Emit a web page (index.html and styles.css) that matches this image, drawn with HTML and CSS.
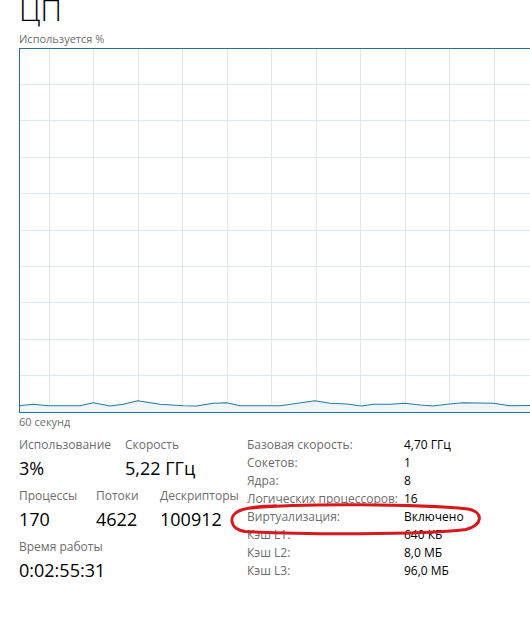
FILE: index.html
```html
<!DOCTYPE html>
<html lang="ru">
<head>
<meta charset="utf-8">
<title>ЦП</title>
<link rel="stylesheet" href="styles.css">
</head>
<body>
<div class="page">
  <div class="title">ЦП</div>
  <div class="caption">Используется %</div>
  <svg class="chart" width="515" height="366" viewBox="19 48 515 366" xmlns="http://www.w3.org/2000/svg">
    <rect x="19" y="48" width="515" height="366" fill="#ffffff"/>
    <g stroke="#dfe8ee" stroke-width="1">
      <line x1="49.5" y1="48" x2="49.5" y2="412"/>
      <line x1="93.5" y1="48" x2="93.5" y2="412"/>
      <line x1="138.5" y1="48" x2="138.5" y2="412"/>
      <line x1="182.5" y1="48" x2="182.5" y2="412"/>
      <line x1="227.5" y1="48" x2="227.5" y2="412"/>
      <line x1="271.5" y1="48" x2="271.5" y2="412"/>
      <line x1="316.5" y1="48" x2="316.5" y2="412"/>
      <line x1="360.5" y1="48" x2="360.5" y2="412"/>
      <line x1="405.5" y1="48" x2="405.5" y2="412"/>
      <line x1="449.5" y1="48" x2="449.5" y2="412"/>
      <line x1="494.5" y1="48" x2="494.5" y2="412"/>
      <line x1="19" y1="84.5" x2="534" y2="84.5"/>
      <line x1="19" y1="120.5" x2="534" y2="120.5"/>
      <line x1="19" y1="157.5" x2="534" y2="157.5"/>
      <line x1="19" y1="193.5" x2="534" y2="193.5"/>
      <line x1="19" y1="230.5" x2="534" y2="230.5"/>
      <line x1="19" y1="266.5" x2="534" y2="266.5"/>
      <line x1="19" y1="302.5" x2="534" y2="302.5"/>
      <line x1="19" y1="339.5" x2="534" y2="339.5"/>
      <line x1="19" y1="375.5" x2="534" y2="375.5"/>
    </g>
    <polygon fill="#eef6fb" points="19,405.7 33.3,404.3 48.3,405.7 80,405.7 93.3,402.7 110,406 123.3,404.3 137.7,400.7 160,404.3 183.3,405.7 196.7,406 213.3,403.3 226.7,402.7 240,405.7 280,405.7 315,400.7 330,403.3 346.7,404 361.7,406 373.3,404.3 390,404.3 405,403.3 420,405 433.3,406 446.7,404.3 463.3,402.7 493.3,403.3 510,405.7 534,405.5 534,412 19,412"/>
    <polyline fill="none" stroke="#2a77a2" stroke-width="1.1" points="19,405.7 33.3,404.3 48.3,405.7 80,405.7 93.3,402.7 110,406 123.3,404.3 137.7,400.7 160,404.3 183.3,405.7 196.7,406 213.3,403.3 226.7,402.7 240,405.7 280,405.7 315,400.7 330,403.3 346.7,404 361.7,406 373.3,404.3 390,404.3 405,403.3 420,405 433.3,406 446.7,404.3 463.3,402.7 493.3,403.3 510,405.7 534,405.5"/>
    <g stroke="#2b7197" stroke-width="1" fill="none">
      <line x1="19.5" y1="48" x2="19.5" y2="413"/>
      <line x1="19" y1="48.5" x2="534" y2="48.5"/>
      <line x1="19" y1="412.5" x2="534" y2="412.5"/>
    </g>
  </svg>
  <div class="caption axis">60 секунд</div>

  <div class="details">
    <div class="stats">
      <div class="stat-row">
        <div class="stat stat-usage">
          <div class="label">Использование</div>
          <div class="value">3%</div>
        </div>
        <div class="stat">
          <div class="label">Скорость</div>
          <div class="value">5,22 ГГц</div>
        </div>
      </div>
      <div class="stat-row">
        <div class="stat stat-proc">
          <div class="label">Процессы</div>
          <div class="value">170</div>
        </div>
        <div class="stat stat-threads">
          <div class="label">Потоки</div>
          <div class="value">4622</div>
        </div>
        <div class="stat">
          <div class="label">Дескрипторы</div>
          <div class="value">100912</div>
        </div>
      </div>
      <div class="stat-row">
        <div class="stat">
          <div class="label">Время работы</div>
          <div class="value">0:02:55:31</div>
        </div>
      </div>
    </div>

    <div class="specs">
      <div class="spec-label">Базовая скорость:</div><div class="spec-value">4,70 ГГц</div>
      <div class="spec-label">Сокетов:</div><div class="spec-value">1</div>
      <div class="spec-label">Ядра:</div><div class="spec-value">8</div>
      <div class="spec-label">Логических процессоров:</div><div class="spec-value">16</div>
      <div class="spec-label">Виртуализация:</div><div class="spec-value">Включено</div>
      <div class="spec-label">Кэш L1:</div><div class="spec-value">640 КБ</div>
      <div class="spec-label">Кэш L2:</div><div class="spec-value">8,0 МБ</div>
      <div class="spec-label">Кэш L3:</div><div class="spec-value">96,0 МБ</div>
    </div>

    <svg class="circle" width="260" height="40" viewBox="226 500 260 40" xmlns="http://www.w3.org/2000/svg">
      <path d="M 252 507 C 300 502, 420 503, 468 508 C 484 511, 483 524, 466 528.5 C 420 534, 300 533.5, 245 530.5 C 229 528, 228 514, 240 509.5 C 249 506, 262 505, 276 505" fill="none" stroke="#d6191c" stroke-width="3" stroke-linecap="round"/>
    </svg>
  </div>
</div>
</body>
</html>
```

FILE: styles.css
```css
html, body {
  margin: 0;
  padding: 0;
  background: #ffffff;
  overflow: hidden;
}

body {
  font-family: "Open Sans", "Noto Sans", sans-serif;
  color: #000000;
  width: 530px;
  height: 624px;
}

.page {
  padding-left: 19px;
}

.title {
  font-size: 30px;
  font-weight: 300;
  line-height: 30px;
  margin-top: -5px;
}

.caption {
  font-size: 11px;
  line-height: 14px;
  color: #6d6d6d;
  margin-top: 7px;
}

.chart {
  display: block;
  margin-top: 2px;
}

.caption.axis {
  margin-top: 1px;
}

.details {
  position: relative;
  display: flex;
  margin-top: 8px;
}

.stats {
  width: 228px;
  display: flex;
  flex-direction: column;
  gap: 8px;
}

.stat-row {
  display: flex;
}

.stat-usage {
  width: 106px;
}

.stat-proc {
  width: 77px;
}

.stat-threads {
  width: 64px;
}

.label {
  font-size: 12px;
  line-height: 16px;
  color: #6d6d6d;
}

.value {
  font-size: 18px;
  line-height: 24px;
  margin-top: 3px;
  white-space: nowrap;
}

.specs {
  display: grid;
  grid-template-columns: 157px auto;
  grid-auto-rows: 18px;
  font-size: 12px;
  line-height: 18px;
  margin-top: -1px;
}

.spec-label {
  color: #6d6d6d;
  white-space: nowrap;
}

.spec-value {
  color: #000000;
  white-space: nowrap;
}

.circle {
  position: absolute;
  left: 207px;
  top: 64px;
}
```
